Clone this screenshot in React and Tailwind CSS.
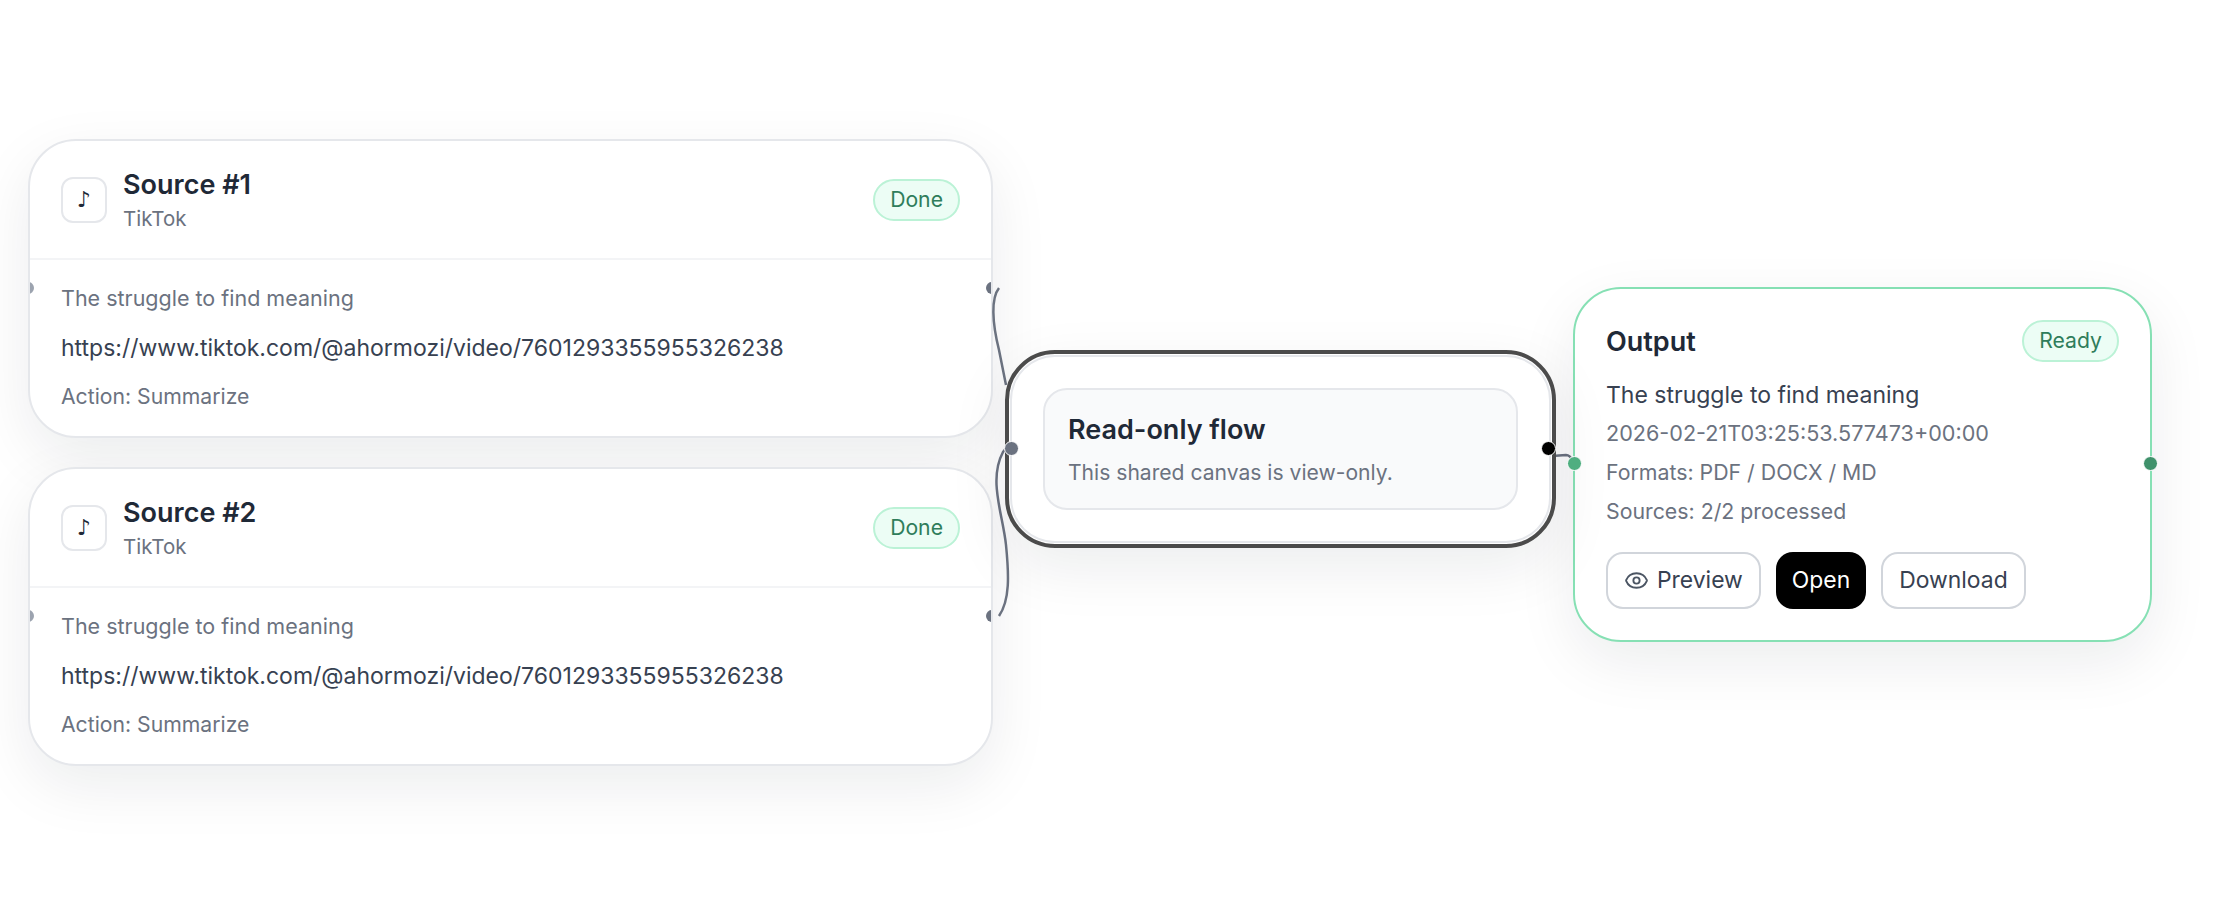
import React from "react";
import { Eye } from "lucide-react";

const font = { fontFamily: "Inter, 'Noto Sans', sans-serif" };

function Badge({ children }) {
  return (
    <span className="h-[42px] px-[15px] flex items-center rounded-full border-2 border-[#bbf2d6] bg-[#ecfdf5] text-[21.2px] leading-none text-[#2f7d5b]">
      {children}
    </span>
  );
}

function Source({ title, className }) {
  return (
    <div className={`absolute left-[28px] w-[965px] h-[299px] z-10 rounded-[48px] border-2 border-[#e5e7eb] bg-white overflow-hidden shadow-[0_20px_60px_rgba(17,24,39,0.08)] ${className}`}>
      <div className="h-[119px] pl-[31px] pr-[31px] flex items-center justify-between border-b-2 border-[#f3f4f6]">
        <div className="flex items-center gap-[16px]">
          <div className="w-[46px] h-[46px] rounded-[12px] border-2 border-[#e5e7eb] flex items-center justify-center text-[22px] text-[#1f2937]" style={{ fontFamily: "'DejaVu Sans', sans-serif" }}>♪</div>
          <div className="flex flex-col gap-[2px]">
            <div className="text-[27px] leading-[36px] font-semibold text-[#1f2937]">{title}</div>
            <div className="text-[20.5px] leading-[28px] text-[#6b7280]">TikTok</div>
          </div>
        </div>
        <Badge>Done</Badge>
      </div>
      <div className="pl-[31px] pt-[24px] flex flex-col">
        <div className="text-[21.5px] leading-[28px] text-[#6b7280]">The struggle to find meaning</div>
        <div className="mt-[21px] text-[23px] leading-[30px] text-[#374151]">https://www.tiktok.com/@ahormozi/video/7601293355955326238</div>
        <div className="mt-[19px] text-[21.2px] leading-[28px] text-[#6b7280]">Action: Summarize</div>
      </div>
      <span className="absolute left-[-8px] top-[141px] w-[12px] h-[12px] rounded-full bg-[#9ca3af]" />
      <span className="absolute right-[-7px] top-[141px] w-[12px] h-[12px] rounded-full bg-[#6b7280]" />
    </div>
  );
}

function Handle({ className }) {
  return <span className={`absolute z-30 w-[15px] h-[15px] rounded-full border-[1.5px] border-white ${className}`} />;
}

function Button({ children, dark }) {
  return (
    <button className={`h-[57px] flex items-center gap-[8px] rounded-[17px] border-2 text-[22.9px] leading-none ${dark ? "px-[14px] border-black bg-black text-white" : "px-[16px] border-[#d1d5db] bg-white text-[#374151]"}`}>
      {children}
    </button>
  );
}

export default function App() {
  return (
    <div className="relative w-[2232px] h-[906px] bg-white overflow-hidden" style={font}>
      <svg className="absolute inset-0 z-20" width="2232" height="906" fill="none">
        <path d="M999 288 C991 298 992 322 999 350 L1006 385" stroke="#6b7280" strokeWidth="2.5" />
        <path d="M999 616 C1010 600 1009 575 1006 545 C1003 515 988 480 1003 452 L1008 446" stroke="#6b7280" strokeWidth="2.5" />
      </svg>
      <Source title="Source #1" className="top-[139px]" />
      <Source title="Source #2" className="top-[467px]" />

      <div className="absolute z-20 left-[1005px] top-[350px] w-[551px] h-[198px] rounded-[50px] border-[4px] border-[#4b4b4b] bg-white p-[34px] flex shadow-[inset_0_0_0_1px_#ffffff,inset_0_0_0_3px_#e5e7eb,0_20px_60px_rgba(17,24,39,0.08)]">
        <div className="flex-1 rounded-[24px] border-2 border-[#e5e7eb] bg-[#f9fafb] px-[23px] flex flex-col justify-center">
          <div className="text-[27px] leading-[36px] font-semibold text-[#1f2937]">Read-only flow</div>
          <div className="mt-[11px] text-[21.1px] leading-[28px] text-[#6b7280]">This shared canvas is view-only.</div>
        </div>
      </div>
      <Handle className="left-[1004px] top-[441px] bg-[#6b7280]" />
      <Handle className="left-[1541px] top-[441px] bg-black" />

      <svg className="absolute inset-0 z-0" width="2232" height="906" fill="none">
        <path d="M1552 456 L1566 455 C1569 455 1571 457 1573 461" stroke="#6b7280" strokeWidth="2.5" />
      </svg>

      <div className="absolute z-10 left-[1573px] top-[287px] w-[579px] h-[355px] rounded-[48px] border-2 border-[#86e0b4] bg-white px-[31px] pt-[31px] flex flex-col shadow-[0_20px_60px_rgba(17,24,39,0.08)]">
        <div className="flex items-center justify-between h-[42px]">
          <div className="pt-[2px] text-[27px] font-semibold text-[#1f2937]">Output</div>
          <Badge>Ready</Badge>
        </div>
        <div className="mt-[17px] text-[23px] leading-[32px] text-[#374151]">The struggle to find meaning</div>
        <div className="mt-[8px] text-[21.6px] leading-[28px] text-[#6b7280]">2026-02-21T03:25:53.577473+00:00</div>
        <div className="mt-[11px] text-[21.3px] leading-[28px] text-[#6b7280]">Formats: PDF / DOCX / MD</div>
        <div className="mt-[11px] text-[21.3px] leading-[28px] text-[#6b7280]">Sources: 2/2 processed</div>
        <div className="mt-[27px] flex gap-[15px]">
          <Button><Eye size={25} strokeWidth={1.8} className="text-[#4b5563]" />Preview</Button>
          <Button dark>Open</Button>
          <Button>Download</Button>
        </div>
      </div>
      <Handle className="left-[1567px] top-[456px] bg-[#4fae80]" />
      <Handle className="left-[2143px] top-[456px] bg-[#3f916b]" />
    </div>
  );
}
